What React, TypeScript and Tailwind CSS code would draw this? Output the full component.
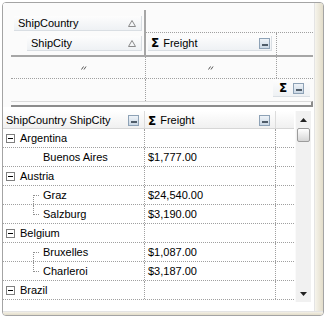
import React from "react";

function MinusBox() {
  return (
    <div className="w-[11px] h-[11px] border border-[#8ea2b6] bg-gradient-to-b from-[#eef3f8] to-[#cbd8e5] flex items-end justify-center pb-[2px]">
      <div className="w-[6px] h-[2px] bg-[#4f5c69]" />
    </div>
  );
}

function SortUp() {
  return (
    <svg width="8" height="7" viewBox="0 0 8 7">
      <path d="M4 0.5 L7.5 6.5 L0.5 6.5 Z" fill="none" stroke="#8a8a8a" strokeWidth="1" />
    </svg>
  );
}

function Ditto() {
  return (
    <svg width="6" height="4" viewBox="0 0 6 4">
      <path d="M0.5 3.5 L2.5 0.5 M3 3.5 L5 0.5" stroke="#555" strokeWidth="1" />
    </svg>
  );
}

function TreeMinus() {
  return (
    <div className="w-[9px] h-[9px] border border-[#7f7f7f] bg-white flex items-center justify-center">
      <div className="w-[5px] h-px bg-black" />
    </div>
  );
}

const btn =
  "h-[15px] flex items-center bg-gradient-to-b from-[#fdfdfd] to-[#eef1f4] border-b border-r border-[#d9dee3]";

type Row =
  | { kind: "group"; label: string }
  | { kind: "child"; label: string; value: string; line: "none" | "first" | "last" };

const rows: Row[] = [
  { kind: "group", label: "Argentina" },
  { kind: "child", label: "Buenos Aires", value: "$1,777.00", line: "none" },
  { kind: "group", label: "Austria" },
  { kind: "child", label: "Graz", value: "$24,540.00", line: "first" },
  { kind: "child", label: "Salzburg", value: "$3,190.00", line: "last" },
  { kind: "group", label: "Belgium" },
  { kind: "child", label: "Bruxelles", value: "$1,087.00", line: "first" },
  { kind: "child", label: "Charleroi", value: "$3,187.00", line: "last" },
  { kind: "group", label: "Brazil" },
];

function Connector({ line }: { line: "none" | "first" | "last" }) {
  if (line === "none") return <div className="w-[6px]" />;
  return (
    <div className="w-[6px] h-[18px] flex flex-col">
      {line === "first" ? (
        <>
          <div className="h-[9px]" />
          <div className="flex-1 border-l border-t border-dotted border-[#8f8f8f]" />
        </>
      ) : (
        <>
          <div className="h-[10px] border-l border-b border-dotted border-[#8f8f8f]" />
          <div className="flex-1" />
        </>
      )}
    </div>
  );
}

export default function App() {
  return (
    <div className="w-[326px] h-[317px] bg-white pl-[2px] pt-[2px] font-['Liberation_Sans',Arial,sans-serif] text-[11px] text-black">
      <div className="w-[322px] h-[314px] rounded-[4px] border border-[#a4a4a4] overflow-hidden flex flex-col">
        <div className="flex h-[308px]">
          <div className="w-[311px] bg-white flex flex-col">
            {/* pivot panel */}
            <div className="h-[104px] bg-[#fbfbfb] pl-[8px] flex flex-col">
              <div className="h-[52px] flex">
                <div className="w-[133px] flex flex-col">
                  <div className={`${btn} mt-[13px] ml-[3px] w-[128px] pl-[4px] pr-[5px] justify-between`}>
                    <span>ShipCountry</span>
                    <SortUp />
                  </div>
                  <div className={`${btn} mt-[5px] ml-[16px] w-[115px] pl-[4px] pr-[5px] justify-between`}>
                    <span>ShipCity</span>
                    <SortUp />
                  </div>
                </div>
                <div className="w-[2px] mt-[7px] bg-[#a6a6a6]" />
                <div className="w-[167px] flex flex-col">
                  <div className="h-[29px]" />
                  <div className="flex-1 border-t border-dotted border-[#a0a0a0] flex">
                    <div className={`${btn} ml-[2px] mt-[3px] w-[124px] pl-[3px] pr-[1px] justify-between`}>
                      <span className="flex items-center">
                        <span className="font-bold text-[12px] font-['DejaVu_Sans',sans-serif] leading-none">Σ</span>
                        <span className="ml-[4px]">Freight</span>
                      </span>
                      <MinusBox />
                    </div>
                    <div className="w-[4px]" />
                    <div className="border-l border-dotted border-[#a0a0a0]" />
                  </div>
                </div>
              </div>
              <div className="h-[2px] w-[302px] bg-[#a6a6a6]" />
              <div className="w-[302px] flex flex-col">
                <div className="h-[21px] flex">
                  <div className="w-[135px] border-r border-dotted border-[#a0a0a0] flex items-center pl-[70px]">
                    <Ditto />
                  </div>
                  <div className="w-[131px] border-r border-dotted border-[#a0a0a0] flex items-center justify-center">
                    <Ditto />
                  </div>
                </div>
                <div className="h-[23px] border-t border-dotted border-[#a0a0a0] flex">
                  <div className="w-[135px] border-r border-dotted border-[#a0a0a0]" />
                  <div className="w-[127px]" />
                  <div className="mt-[1px] h-[17px] w-[37px] bg-gradient-to-b from-[#fdfdfd] to-[#eef1f4] border-b border-[#d9dee3] flex items-center pl-[6px] gap-[6px]">
                    <span className="font-bold text-[12px] font-['DejaVu_Sans',sans-serif] leading-none">Σ</span>
                    <MinusBox />
                  </div>
                </div>
              </div>
              <div className="h-[6px] w-[302px] border-t border-[#dadada] border-r-2 border-b-2 border-r-[#8c8c8c] border-b-[#8c8c8c]" />
            </div>

            {/* grid */}
            <div className="pt-[4px] flex">
              <div className="w-[291px] flex flex-col">
                <div className="h-[18px] flex bg-gradient-to-b from-white to-[#f0f0f0] border-b border-[#d6d6d6]">
                  <div className="w-[142px] border-r border-[#dcdcdc] flex items-center justify-between pl-[3px] pr-[5px] pt-[2px]">
                    <span>ShipCountry ShipCity</span>
                    <MinusBox />
                  </div>
                  <div className="w-[131px] border-r border-[#dcdcdc] flex items-center justify-between pl-[3px] pr-[5px] pt-[2px]">
                    <span className="flex items-center">
                      <span className="font-bold text-[12px] font-['DejaVu_Sans',sans-serif] leading-none">Σ</span>
                      <span className="ml-[4px]">Freight</span>
                    </span>
                    <MinusBox />
                  </div>
                  <div className="flex-1" />
                </div>
                {rows.map((r, i) => (
                  <div key={i} className="h-[19px] flex border-b border-dotted border-[#a0a0a0]">
                    <div className="w-[142px] border-r border-dotted border-[#a0a0a0] flex items-center">
                      {r.kind === "group" ? (
                        <>
                          <div className="ml-[3px]">
                            <TreeMinus />
                          </div>
                          <span className="ml-[5px]">{r.label}</span>
                        </>
                      ) : (
                        <>
                          <div className="ml-[30px] self-start">
                            <Connector line={r.line} />
                          </div>
                          <span className="ml-[4px]">{r.label}</span>
                        </>
                      )}
                    </div>
                    <div className="w-[131px] border-r border-dotted border-[#a0a0a0] flex items-center pl-[3px]">
                      {r.kind === "child" ? r.value : ""}
                    </div>
                    <div className="flex-1" />
                  </div>
                ))}
              </div>
              <div className="ml-[1px] w-[16px] h-[191px] bg-[#f1f1f1] border-l border-[#fafafa] flex flex-col">
                <div className="h-[17px] flex items-center justify-center">
                  <svg width="7" height="4" viewBox="0 0 7 4">
                    <path d="M3.5 0 L7 4 L0 4 Z" fill="#222" />
                  </svg>
                </div>
                <div className="h-[14px] mx-[1px] rounded-[2px] border border-[#9c9c9c] bg-gradient-to-b from-white to-[#d6d6d6]" />
                <div className="flex-1" />
                <div className="h-[17px] flex items-center justify-center">
                  <svg width="7" height="4" viewBox="0 0 7 4">
                    <path d="M0 0 L7 0 L3.5 4 Z" fill="#222" />
                  </svg>
                </div>
              </div>
            </div>
          </div>
          <div className="flex-1 border-l border-[#e4e4e4] bg-gradient-to-r from-[#f6f4ec] to-[#e3ddca]" />
        </div>
        <div className="flex-1 border-t border-[#e4e4e4] bg-gradient-to-b from-[#f3f0e6] to-[#e3ddca]" />
      </div>
    </div>
  );
}
